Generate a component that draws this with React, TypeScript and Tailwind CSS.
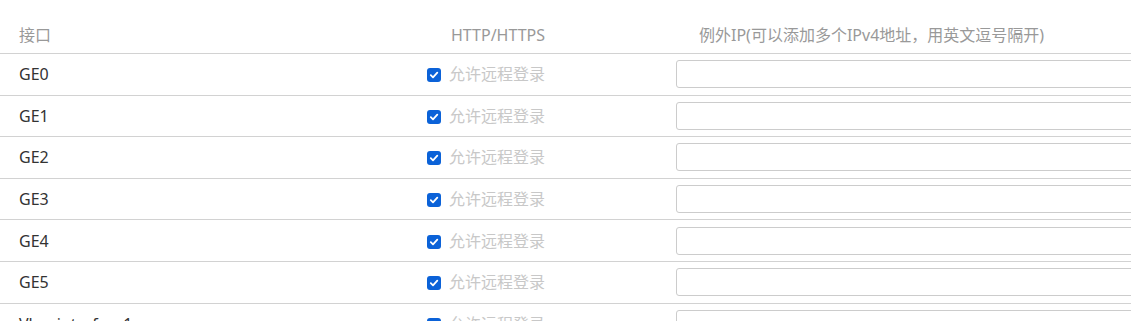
import React from "react";

const rows = ["GE0", "GE1", "GE2", "GE3", "GE4", "GE5", "Vlan-interface1"];

function Check() {
  return (
    <span className="mt-[2px] flex h-[14px] w-[14px] shrink-0 items-center justify-center rounded-[3px] bg-[#0b62d8]">
      <svg width="10" height="10" viewBox="0 0 10 10">
        <path d="M1.8 5.2 L4 7.3 L8.3 2.6" fill="none" stroke="white" strokeWidth="1.8" strokeLinecap="round" strokeLinejoin="round" />
      </svg>
    </span>
  );
}

export default function App() {
  return (
    <div
      className="w-[1131px] h-[321px] overflow-hidden bg-white text-[16px]"
      style={{ fontFamily: '"Noto Sans", "Noto Sans CJK SC", sans-serif' }}
    >
      <div className="flex h-[54px] items-end border-b border-[#d2d2d2] pb-[8px] leading-[20px] text-[#999]">
        <div className="w-[427px] shrink-0 pl-[19px]">接口</div>
        <div className="w-[249px] shrink-0 pl-[24px]">HTTP/HTTPS</div>
        <div className="flex-1 pl-[23px] whitespace-nowrap">例外IP(可以添加多个IPv4地址，用英文逗号隔开)</div>
      </div>
      {rows.map((r) => (
        <div key={r} className="flex h-[41.6px] items-center border-b border-[#d2d2d2] leading-[20px]">
          <div className="w-[427px] shrink-0 pl-[19px] text-[#333]">{r}</div>
          <div className="flex w-[249px] shrink-0 items-center gap-[8px] text-[#c8c8c8]">
            <Check />
            <span>允许远程登录</span>
          </div>
          <div className="flex-1">
            <div className="h-[28px] w-[600px] rounded-[3px] border border-[#cccccc] bg-white" />
          </div>
        </div>
      ))}
    </div>
  );
}
